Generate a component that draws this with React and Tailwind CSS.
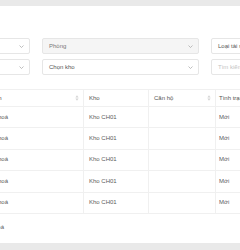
import React from "react";

const font = { fontFamily: '"Liberation Sans", Arial, sans-serif' };

const Chevron = () => (
  <svg width="5" height="3" viewBox="0 0 5 3" className="shrink-0">
    <path d="M0.5 0.5 L2.5 2.5 L4.5 0.5" fill="none" stroke="#a3a3a3" strokeWidth="0.7" />
  </svg>
);

const Sort = () => (
  <svg width="4" height="6" viewBox="0 0 4 6" className="shrink-0">
    <path d="M2 0.3 L3.6 2.4 L0.4 2.4 Z" fill="#d4d4d4" />
    <path d="M2 5.7 L3.6 3.6 L0.4 3.6 Z" fill="#d4d4d4" />
  </svg>
);

function Field({ text, placeholder, disabled, select }) {
  return (
    <div
      className={`h-[16px] flex items-center justify-between pl-[6px] pr-[5px] rounded-[2px] border border-[#e6e6e6] ${
        disabled ? "bg-[#f5f5f5]" : "bg-white"
      }`}
    >
      <span
        className={`text-[6px] leading-none whitespace-nowrap ${
          placeholder ? "text-[#c4c4c4]" : disabled ? "text-[#777]" : "text-[#555]"
        }`}
      >
        {text}
      </span>
      {select && <Chevron />}
    </div>
  );
}

const rows = [1, 2, 3, 4, 5];

export default function App() {
  return (
    <div className="w-[240px] h-[250px] bg-white overflow-hidden flex flex-col antialiased" style={font}>
      <div className="h-[6px] bg-[#e9e9e9] shrink-0" />

      <div className="flex-1 ml-[-127px] w-[520px]">
        {/* filters */}
        <div className="mt-[32px] grid grid-cols-[157px_157px_157px] gap-x-[12px] gap-y-[5px]">
          <Field text="Chọn toà nhà" select />
          <Field text="Phòng" disabled select />
          <Field text="Loại tài sản" />
          <Field text="Chọn tầng" select />
          <Field text="Chọn kho" select />
          <Field text="Tìm kiếm tài sản" placeholder />
        </div>

        {/* table */}
        <div className="mt-[14px] border-t border-[#f0f0f0]">
          <div className="grid grid-cols-[94px_117px_65px_67px_120px] h-[17px] border-b border-[#f0f0f0] text-[6px] text-[#555]">
            <div className="flex items-center justify-between pl-[5px] pr-[4px] border-r border-[#f0f0f0]">
              <span>Mã tài sản</span>
              <Sort />
            </div>
            <div className="flex items-center justify-between pl-[5px] pr-[4px] border-r border-[#f0f0f0]">
              <span>Tên tài sản</span>
              <Sort />
            </div>
            <div className="flex items-center pl-[5px] border-r border-[#f0f0f0]">
              <span>Kho</span>
            </div>
            <div className="flex items-center justify-between pl-[5px] pr-[4px] border-r border-[#f0f0f0]">
              <span>Căn hộ</span>
              <Sort />
            </div>
            <div className="flex items-center pl-[3px]">
              <span className="whitespace-nowrap">Tình trạng</span>
            </div>
          </div>
          {rows.map((r) => (
            <div
              key={r}
              className="grid grid-cols-[94px_117px_65px_67px_120px] h-[21.4px] border-b border-[#f0f0f0] text-[6px] text-[#5c5c5c]"
            >
              <div className="flex items-center pl-[5px] border-r border-[#f0f0f0]">TS00{r}</div>
              <div className="flex items-center pl-[5px] border-r border-[#f0f0f0] whitespace-nowrap">
                Máy điều hoá
              </div>
              <div className="flex items-center pl-[5px] border-r border-[#f0f0f0]">Kho CH01</div>
              <div className="border-r border-[#f0f0f0]" />
              <div className="flex items-center pl-[3px]">Mới</div>
            </div>
          ))}
        </div>

        <div className="mt-[10px] h-[8px] flex items-center pl-[86px] text-[6px] text-[#5c5c5c] whitespace-nowrap">
          Tổng: 5 điều hoá
        </div>
      </div>

      <div className="h-[7px] bg-[#e9e9e9] shrink-0" />
    </div>
  );
}
